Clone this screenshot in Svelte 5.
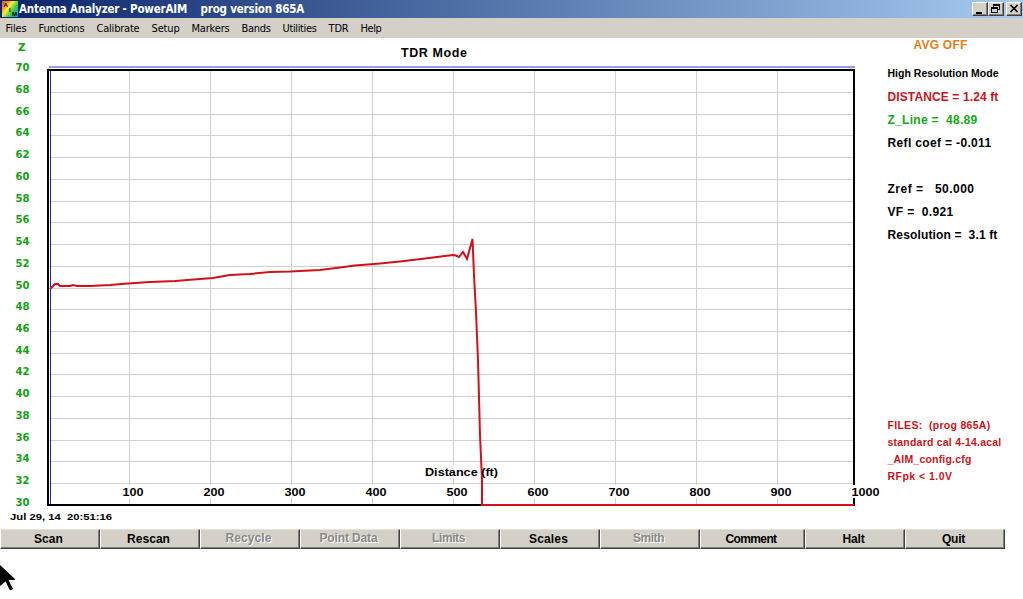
<script>
	const menus = [
		{ name: 'Files', width: 21 },
		{ name: 'Functions', width: 46 },
		{ name: 'Calibrate', width: 43 },
		{ name: 'Setup', width: 28 },
		{ name: 'Markers', width: 38 },
		{ name: 'Bands', width: 29 },
		{ name: 'Utilities', width: 34 },
		{ name: 'TDR', width: 20 },
		{ name: 'Help', width: 21 },
	];

	const readouts = [
		{ text: 'High Resolution Mode', width: 111, kind: 'small' },
		{ text: 'DISTANCE = 1.24 ft', width: 111, kind: 'red' },
		{ text: 'Z_Line =  48.89', width: 90, kind: 'green' },
		{ text: 'Refl coef = -0.011', width: 104, kind: '' },
		{ text: '', width: 0, kind: '' },
		{ text: 'Zref =   50.000', width: 87, kind: '' },
		{ text: 'VF =  0.921', width: 66, kind: '' },
		{ text: 'Resolution =  3.1 ft', width: 110, kind: '' },
	];

	const files = [
		{ text: 'FILES:  (prog 865A)', width: 103 },
		{ text: 'standard cal 4-14.acal', width: 114 },
		{ text: '_AIM_config.cfg', width: 84 },
		{ text: 'RFpk < 1.0V', width: 65 },
	];

	const actions = [
		{ name: 'Scan', width: 29 },
		{ name: 'Rescan', width: 43 },
		{ name: 'Recycle', width: 46, disabled: true },
		{ name: 'Point Data', width: 58, disabled: true },
		{ name: 'Limits', width: 33, disabled: true },
		{ name: 'Scales', width: 39 },
		{ name: 'Smith', width: 31, disabled: true },
		{ name: 'Comment', width: 51 },
		{ name: 'Halt', width: 22 },
		{ name: 'Quit', width: 23 },
	];

	const impedances = Array.from({ length: 21 }, (_, i) => 70 - i * 2);
	const distances = Array.from({ length: 10 }, (_, i) => (i + 1) * 100);

	const yFor = (z) => Math.floor(70.8 + ((70 - z) / 40) * 434.5);
	const xFor = (ft) => 48 + ft * 0.81;

	const trace =
		'50,289 53,286 55,284 58,284 60,286 70,286 73,285 77,286 90,286 110,285 128,283.5 150,282 175,281 200,279 213,278 230,275 250,274 270,272 290,271.5 320,270 340,267.5 355,265.5 380,263.5 400,261.5 425,258.5 453,255 456,255.5 459,257 463,252 467,259 472.5,239 474,275 476,312 478,360 480,435 482,480 482,505 854,505';

	// spreads the letters so that a label fills its column
	function fit(node, width) {
		const count = node.textContent.length;
		if (!count) return;
		const natural = node.getBoundingClientRect().width;
		node.style.letterSpacing = `${(width - natural) / count}px`;
	}
</script>

<svelte:head>
	<title>Antenna Analyzer - PowerAIM</title>
</svelte:head>

<div class="window">
	<header class="titlebar">
		<svg class="logo" width="16" height="16" viewBox="0 0 16 16">
			<defs>
				<linearGradient id="rainbow" x1="0" y1="0" x2="1" y2="0.75">
					<stop offset="0" stop-color="#e8491c" />
					<stop offset="0.28" stop-color="#ff9d14" />
					<stop offset="0.45" stop-color="#f5f03a" />
					<stop offset="0.7" stop-color="#47cf4c" />
					<stop offset="1" stop-color="#16a4a4" />
				</linearGradient>
			</defs>
			<rect width="16" height="16" fill="url(#rainbow)" />
			<text x="1.5" y="6">A</text>
			<text x="7" y="11">I</text>
			<text x="10" y="15">M</text>
		</svg>
		<h1><span use:fit={285}>Antenna Analyzer - PowerAIM    prog version 865A</span></h1>
		<div class="controls">
			<button aria-label="Minimize">
				<svg width="14" height="12"><path d="M3 9h6v2H3z" /></svg>
			</button>
			<button aria-label="Restore">
				<svg width="14" height="12">
					<path d="M4 1h7v6H9V6h1V3H5v1H4zM2 4h7v6H2zM3 6v3h5V6z" fill-rule="evenodd" />
				</svg>
			</button>
			<button class="close" aria-label="Close">
				<svg width="14" height="12"><path d="M3.5 2l7 7M10.5 2l-7 7" stroke="#000" stroke-width="1.6" /></svg>
			</button>
		</div>
	</header>

	<nav class="menubar">
		{#each menus as menu}
			<span use:fit={menu.width}>{menu.name}</span>
		{/each}
	</nav>

	<main>
		<svg class="chart" width="884" height="490" viewBox="0 38 884 490">
			<g class="grid">
				{#each impedances.slice(1, -1) as z}
					<rect x="48" y={yFor(z)} width="806" height="1" />
				{/each}
				{#each distances.slice(0, -1) as ft}
					<rect x={Math.floor(xFor(ft))} y="71" width="1" height="433" />
				{/each}
			</g>

			<rect x="49" y="66" width="806" height="2" fill="#9a9aec" />
			<rect x="47" y="69" width="2" height="437" />
			<rect x="48" y="69" width="807" height="2" />
			<rect x="853" y="69" width="2" height="437" />
			<rect x="47" y="504" width="808" height="2" />
			<rect x="50" y="71" width="1" height="433" fill="#2222c4" />

			<rect x="425" y="465" width="74" height="13" fill="#fff" />
			<polyline class="trace" points={trace} />

			<text class="title" x="401" y="57" textLength="66">TDR Mode</text>
			<text class="axis" x="425" y="476" textLength="73" lengthAdjust="spacingAndGlyphs">Distance (ft)</text>

			{#each distances as ft}
				<rect x={xFor(ft) - 7} y="485" width={ft === 1000 ? 29 : 22} height="13" fill="#fff" />
				<text
					class="axis"
					x={xFor(ft) - 6.5}
					y="496"
					textLength={ft === 1000 ? 28 : 21}
					lengthAdjust="spacingAndGlyphs">{ft}</text
				>
			{/each}

			<g class="scale">
				<text x="18" y="51">Z</text>
				{#each impedances as z}
					<text x="15.5" y={yFor(z) + 1} textLength="14" lengthAdjust="spacingAndGlyphs">{z}</text>
				{/each}
			</g>

			<text class="stamp" x="10" y="520" textLength="102" lengthAdjust="spacingAndGlyphs">Jul 29, 14&nbsp; 20:51:16</text>
		</svg>

		<aside>
			<div class="average"><span use:fit={54}>AVG OFF</span></div>
			<div class="readouts">
				{#each readouts as line}
					<div class={line.kind}><span use:fit={line.width}>{line.text}</span></div>
				{/each}
			</div>
			<div class="files">
				{#each files as line}
					<div><span use:fit={line.width}>{line.text}</span></div>
				{/each}
			</div>
		</aside>
	</main>

	<footer>
		{#each actions as action}
			<button class="action" class:wide={action.name === 'Comment'} disabled={action.disabled}>
				<span use:fit={action.width}>{action.name}</span>
			</button>
		{/each}
	</footer>

	<svg class="pointer" width="16" height="26" viewBox="0 0 16 26">
		<path d="M0 0L15 14V15H8.5L13 24L10 25.5L5.5 16.5L0 21Z" />
	</svg>
</div>

<style>
	:global(body) {
		background: #fff;
		overflow: hidden;
	}

	.window {
		position: relative;
		width: 1023px;
		height: 599px;
		background: #fff;
		font-family: 'Liberation Sans', Arial, sans-serif;
		font-size: 12px;
		font-weight: bold;
		color: #000;
		overflow: hidden;
	}

	span {
		display: inline-block;
		white-space: pre;
	}

	.titlebar {
		display: flex;
		align-items: center;
		height: 18px;
		padding: 0 1px 0 2px;
		box-sizing: border-box;
		background: linear-gradient(90deg, #0a246a, #a6caf0);
		color: #fff;
	}

	.logo {
		margin-right: 1px;
	}

	.logo text {
		font-size: 6px;
	}

	h1 {
		flex: 1;
		margin: 0;
		font-family: 'DejaVu Sans Condensed', 'DejaVu Sans', sans-serif;
		font-size: 11.5px;
		line-height: 20px;
	}

	.controls {
		display: flex;
	}

	.controls button {
		width: 16px;
		height: 14px;
		padding: 0;
		border: 1px solid;
		border-color: #fff #404040 #404040 #fff;
		background: #d4d0c8;
		box-shadow: inset -1px -1px #808080;
	}

	.controls svg {
		display: block;
	}

	.controls .close {
		margin-left: 2px;
	}

	.menubar {
		display: flex;
		gap: 12px;
		height: 20px;
		padding-left: 5.5px;
		background: #d4d0c8;
		font-family: 'DejaVu Sans Condensed', 'DejaVu Sans', sans-serif;
		font-size: 11px;
		font-weight: normal;
		line-height: 21px;
	}

	main {
		display: flex;
		height: 490px;
	}

	.chart {
		flex: none;
	}

	.grid {
		fill: #cfcfcf;
	}

	.trace {
		fill: none;
		stroke: #d01218;
		stroke-width: 2;
	}

	.title {
		font-size: 12.5px;
	}

	.axis {
		font-size: 11.5px;
	}

	.scale {
		fill: #14a014;
		font-family: 'DejaVu Sans', sans-serif;
		font-size: 10.5px;
	}

	.stamp {
		font-size: 9.5px;
	}

	aside {
		padding-left: 3.5px;
	}

	.average {
		height: 25px;
		padding-left: 26px;
		line-height: 15px;
		color: #df7f16;
	}

	.readouts div {
		height: 23px;
		line-height: 23px;
	}

	.readouts .small {
		font-size: 10.5px;
		line-height: 21px;
	}

	.readouts .red {
		color: #c8141c;
	}

	.readouts .green {
		color: #14a81c;
	}

	.files {
		margin-top: 170px;
		font-size: 10.5px;
		line-height: 17px;
		color: #c8141c;
	}

	footer {
		display: flex;
		height: 21px;
	}

	.action {
		width: 100px;
		height: 20px;
		margin-top: 1px;
		padding: 0 3px 0 0;
		border: 1px solid;
		border-color: #e4e2dc #404040 #404040 #fff;
		box-shadow: inset -1px -1px #808080;
		background: #d4d0c8;
		color: #000;
		font: inherit;
		line-height: 18px;
	}

	.action.wide {
		width: 105px;
	}

	.action:disabled {
		color: #888;
		text-shadow: 1px 1px #fff;
	}

	.action:disabled span {
		transform: translateY(-1px);
	}

	.pointer {
		position: absolute;
		left: 0;
		top: 565px;
	}
</style>
